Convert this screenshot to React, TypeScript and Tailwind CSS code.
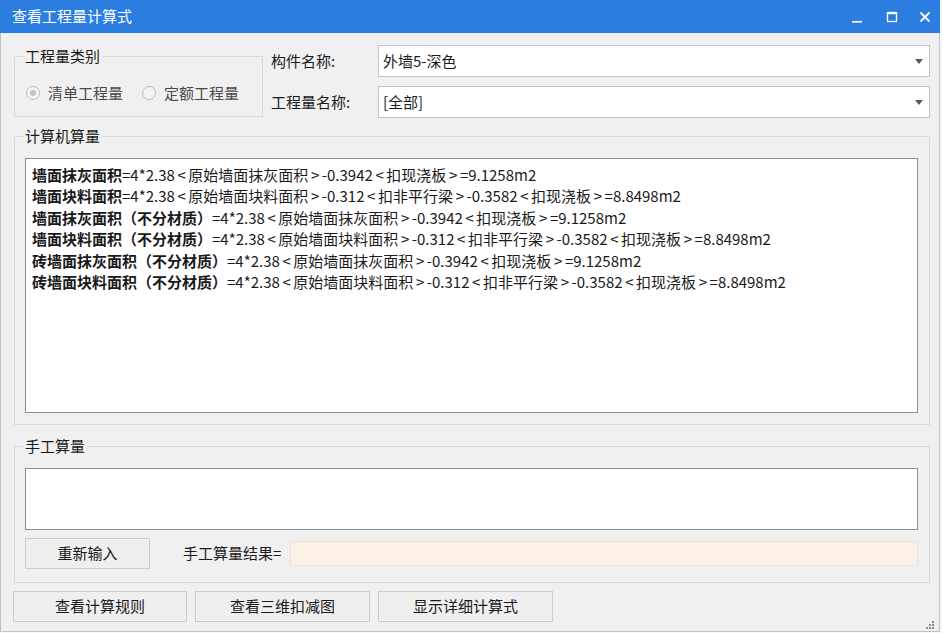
import React from "react";

const lines: [string, string][] = [
  ["墙面抹灰面积", "=4*2.38<原始墙面抹灰面积>-0.3942<扣现浇板>=9.1258m2"],
  ["墙面块料面积", "=4*2.38<原始墙面块料面积>-0.312<扣非平行梁>-0.3582<扣现浇板>=8.8498m2"],
  ["墙面抹灰面积（不分材质）", "=4*2.38<原始墙面抹灰面积>-0.3942<扣现浇板>=9.1258m2"],
  ["墙面块料面积（不分材质）", "=4*2.38<原始墙面块料面积>-0.312<扣非平行梁>-0.3582<扣现浇板>=8.8498m2"],
  ["砖墙面抹灰面积（不分材质）", "=4*2.38<原始墙面抹灰面积>-0.3942<扣现浇板>=9.1258m2"],
  ["砖墙面块料面积（不分材质）", "=4*2.38<原始墙面块料面积>-0.312<扣非平行梁>-0.3582<扣现浇板>=8.8498m2"],
];

// the < > glyphs are drawn wider in the original font
const Formula = ({ text }: { text: string }) => (
  <>
    {text.split(/([<>])/).map((part, i) =>
      part === "<" || part === ">" ? (
        <span key={i} className="inline-block w-[13.5px] text-center">
          {part}
        </span>
      ) : (
        <span key={i}>{part}</span>
      )
    )}
  </>
);

// small grey dropdown arrow
const Caret = () => (
  <svg width="8" height="5" viewBox="0 0 8 5" className="shrink-0">
    <path d="M0 0h8L4 5z" fill="#5a5a5a" />
  </svg>
);

const Select = ({ value }: { value: string }) => (
  <div className="flex h-[32px] w-[552px] items-center justify-between border border-[#c4c4c4] bg-white pl-[4px] pr-[6px]">
    <span className="text-[15px] text-[#1a1a1a]">{value}</span>
    <Caret />
  </div>
);

const Radio = ({ checked, label }: { checked?: boolean; label: string }) => (
  <div className="flex items-center gap-[8px]">
    <span className="flex h-[14px] w-[14px] items-center justify-center rounded-full border border-[#bdbdbd] bg-[#f4f4f4]">
      {checked && <span className="h-[6px] w-[6px] rounded-full bg-[#c2c2c2]" />}
    </span>
    <span className="text-[15px] text-[#4a4a4a]">{label}</span>
  </div>
);

const Btn = ({ label, w }: { label: string; w: string }) => (
  <button className={`${w} flex items-center justify-center border border-[#cccccc] bg-[#efefef] text-[15px] text-[#1a1a1a]`}>
    {label}
  </button>
);

export default function App() {
  return (
    <div className="h-[633px] w-[943px] bg-[#fafafa] font-['Noto_Sans_CJK_SC',sans-serif]">
      <div className="flex h-[632px] w-[940px] flex-col">
        {/* title bar */}
        <div className="flex h-[33px] shrink-0 items-center bg-[#2b7ddf] pl-[12px] text-white">
          <span className="text-[15px]">查看工程量计算式</span>
          <div className="ml-auto flex items-center">
            <svg width="34" height="20" viewBox="0 0 34 20">
              <rect x="12" y="14" width="10" height="1.6" fill="#fff" />
            </svg>
            <svg width="36" height="20" viewBox="0 0 36 20">
              <rect x="13.5" y="5.5" width="9" height="9" fill="none" stroke="#fff" strokeWidth="1.3" />
              <rect x="13" y="5" width="10" height="2.2" fill="#fff" />
            </svg>
            <svg width="30" height="20" viewBox="0 0 30 20">
              <path d="M10.5 5.5l9 9M19.5 5.5l-9 9" stroke="#fff" strokeWidth="1.8" />
            </svg>
          </div>
        </div>

        {/* body */}
        <div className="flex flex-1 flex-col border-x border-b border-[#b9c4d4] bg-[#f0f0f0] pl-[13px] pr-[9px] pt-[12px]">
          {/* top row */}
          <div className="flex">
            <fieldset className="mt-[1px] h-[71px] w-[249px] border border-[#dadada] px-[11px]">
              <legend className="ml-[-3px] px-[2px] text-[15px] leading-[20px] text-[#1a1a1a]">工程量类别</legend>
              <div className="mt-[16px] flex gap-[19px]">
                <Radio checked label="清单工程量" />
                <Radio label="定额工程量" />
              </div>
            </fieldset>
            <div className="ml-[8px] flex flex-col gap-[9px]">
              <div className="flex items-center">
                <span className="w-[107px] text-[15px] text-[#1a1a1a]">构件名称:</span>
                <Select value="外墙5-深色" />
              </div>
              <div className="flex items-center">
                <span className="w-[107px] text-[15px] text-[#1a1a1a]">工程量名称:</span>
                <Select value="[全部]" />
              </div>
            </div>
          </div>

          {/* computed */}
          <fieldset className="mt-[8px] h-[299px] w-[916px] border border-[#dadada] pb-[11px] pl-[10px] pr-[11px] pt-[12px]">
            <legend className="ml-[-2px] px-[2px] text-[15px] leading-[20px] text-[#1a1a1a]">计算机算量</legend>
            <div className="h-[255px] border border-[#8e8e8e] bg-white pl-[6px] pt-[5px] text-[15px] leading-[21.4px] text-[#1a1a1a]">
              {lines.map(([name, formula], i) => (
                <div key={i} className="whitespace-nowrap">
                  <span className="font-bold">{name}</span>
                  <Formula text={formula} />
                </div>
              ))}
            </div>
          </fieldset>

          {/* manual */}
          <fieldset className="mt-[11px] h-[147px] w-[916px] border border-[#dadada] pl-[10px] pr-[11px] pt-[12px]">
            <legend className="ml-[-2px] px-[2px] text-[15px] leading-[20px] text-[#1a1a1a]">手工算量</legend>
            <div className="h-[62px] border border-[#8e8e8e] bg-white" />
            <div className="mt-[8px] flex items-center">
              <Btn label="重新输入" w="w-[125px] h-[31px]" />
              <span className="ml-[33px] w-[107px] text-[15px] text-[#1a1a1a]">手工算量结果=</span>
              <div className="h-[25px] flex-1 border border-[#ece4dc] bg-[#faf0e6]" />
            </div>
          </fieldset>

          {/* bottom buttons */}
          <div className="ml-[-1px] mt-[8px] flex gap-[8px]">
            <Btn label="查看计算规则" w="w-[174px] h-[31px]" />
            <Btn label="查看三维扣减图" w="w-[175px] h-[31px]" />
            <Btn label="显示详细计算式" w="w-[175px] h-[31px]" />
            <svg width="9" height="9" viewBox="0 0 9 9" className="ml-auto mr-[-5px] mt-[30px]">
              <rect x="6" y="0" width="2" height="2" fill="#8c8c8c" />
              <rect x="3" y="3" width="2" height="2" fill="#8c8c8c" />
              <rect x="6" y="3" width="2" height="2" fill="#8c8c8c" />
              <rect x="0" y="6" width="2" height="2" fill="#8c8c8c" />
              <rect x="3" y="6" width="2" height="2" fill="#8c8c8c" />
              <rect x="6" y="6" width="2" height="2" fill="#8c8c8c" />
            </svg>
          </div>
        </div>
      </div>
    </div>
  );
}
